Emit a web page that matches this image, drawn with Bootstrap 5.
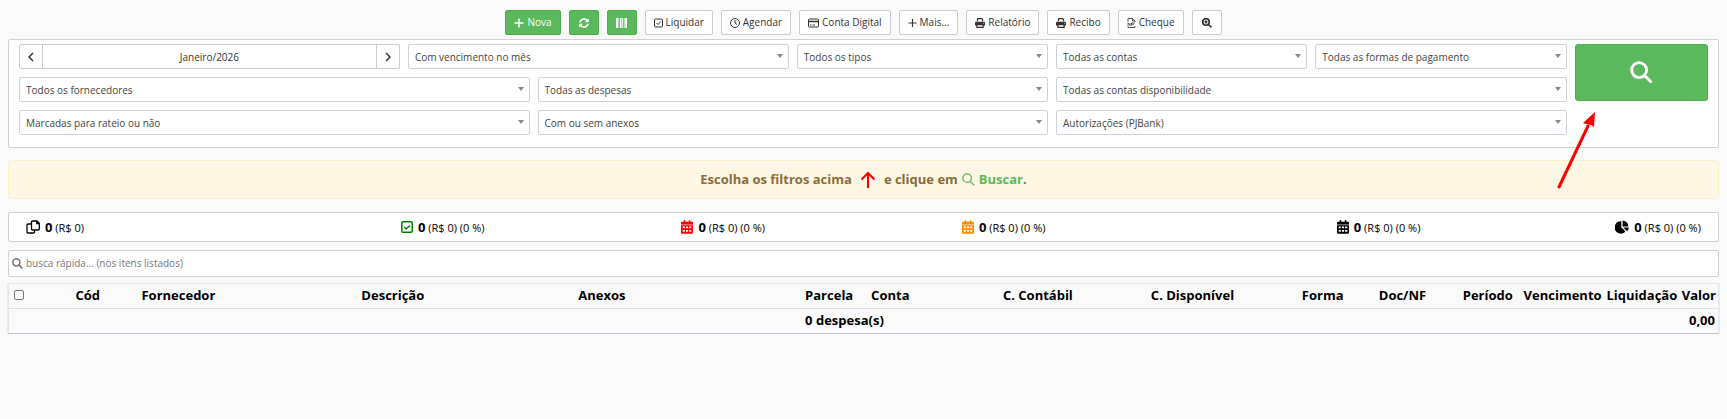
<!DOCTYPE html>
<html lang="pt-BR">
<head>
<meta charset="utf-8">
<meta name="viewport" content="width=device-width, initial-scale=1">
<title>Despesas</title>
<link href="https://cdn.jsdelivr.net/npm/bootstrap@5.3.0/dist/css/bootstrap.min.css" rel="stylesheet">
<style>
  body { font-family: "Open Sans", "Noto Sans", sans-serif; font-size: 10px; line-height: 15px; color: #333; background: #fafafa; }
  svg { fill: currentColor; flex: none; }
  .line-icon { fill: none; stroke: currentColor; }
  .toolbar { gap: 8px; padding: 10px 0 4px; }
  .toolbar .btn, .month .btn { display: inline-flex; align-items: center; justify-content: center; gap: 3px; height: 25px; padding: 0 8px; font-size: 10px; line-height: 15px; border-radius: 2px; }
  .btn-plain { background: #fff; border-color: #ccc; color: #333; }
  .btn-go { background: #5cb85c; border-color: #4cae4c; color: #fff; }
  .btn-plain:hover { background: #e6e6e6; }
  .btn-go:hover { background: #449d44; color: #fff; }
  .toolbar .btn-square { width: 30px; padding: 0; }
  .box { background: #fff; border: 1px solid #ced2da; border-radius: 2px; }
  .filters { padding: 4px 6px 12px; }
  .filters .row { --bs-gutter-x: 8px; --bs-gutter-y: 8px; margin-left: 0; margin-right: 0; }
  .filters .nested { margin-left: -4px; margin-right: -4px; }
  .filters .form-select {
    height: 25px; padding: 1px 20px 0 6px; font-size: 10px; line-height: 15px; color: #444; border-color: #ced2da; border-radius: 2px;
    background-image: url("data:image/svg+xml,%3Csvg xmlns='http://www.w3.org/2000/svg' viewBox='0 0 6 4'%3E%3Cpath fill='%23888' d='M0 0h6L3 4z'/%3E%3C/svg%3E");
    background-size: 6px 4px; background-position: right 5px top 9px;
  }
  .month .btn { width: 24px; padding: 0; }
  .month .form-control { height: 25px; padding: 1px 0 0; font-size: 10px; line-height: 15px; color: #333; border-color: #ccc; border-radius: 2px; }
  .search-btn { height: 57px; border-radius: 3px; }
  .pointer { left: -17px; top: 64px; z-index: 2; pointer-events: none; color: #f00; }
  .hint { margin-top: 12px; padding: 9px; min-height: 39px; background: #fdf7e3; border: 1px solid #faf0cc; border-radius: 3px; color: #8a6d3b; font-size: 13px; line-height: 19px; font-weight: 700; gap: 4px; }
  .hint a { color: #5cb85c; }
  .hint .dot { color: #8a6d3b; }
  .totals { margin-top: 13px; padding: 0 13px; color: #000; font-size: 11px; }
  .totals .row { --bs-gutter-x: 8px; margin: 0; }
  .totals .item { display: flex; align-items: center; height: 28px; gap: 5px; }
  .totals strong { font-size: 13px; }
  .quick { margin-top: 8px; height: 27px; padding: 0 3px; gap: 3px; color: #777; }
  .quick .form-control { padding: 0; font-size: 10px; line-height: 15px; border: 0; background: none; box-shadow: none; }
  .quick .form-control::placeholder { color: #777; }
  .expenses { table-layout: fixed; margin: 6px 0 0; color: #000; font-size: 13px; line-height: 18px; border: 1px solid #e4e7eb; border-bottom-color: #bcc6d2; box-shadow: 0 1px 2px #c9d0d8; }
  .expenses th, .expenses td { padding: 2px 3px 4px; font-weight: 700; white-space: nowrap; background: none; border: 0; height: 25px; vertical-align: middle; }
  .expenses thead tr { border-bottom: 1px solid #dcdfe3; }
  .expenses .form-check-input { display: block; width: 10px; height: 10px; min-height: 0; margin: 0 0 0 2px; border: 1px solid #767676; border-radius: 2px; }
  .c-sel { width: 3.74%; } .c-cod { width: 3.86%; } .c-for { width: 12.86%; } .c-des { width: 12.68%; }
  .c-ane { width: 13.27%; } .c-par { width: 3.86%; } .c-con { width: 7.71%; } .c-ctb { width: 8.65%; }
  .c-dis { width: 8.83%; } .c-frm { width: 4.5%; } .c-doc { width: 4.91%; } .c-per { width: 3.56%; }
  .c-ven { width: 4.85%; } .c-liq { width: 4.4%; } .c-val { width: 2.32%; }
</style>
</head>
<body>
<svg class="d-none">
  <symbol id="search" viewBox="0 0 24 24"><circle cx="9.5" cy="9.5" r="7.8"/><path d="M15 15l7.5 7.5"/></symbol>
  <symbol id="calendar" viewBox="0 0 448 512"><path opacity=".6" d="M0 144h448v48H0z"/><path fill-rule="evenodd" d="M96 0h64v64h128V0h64v64h48c27 0 48 21 48 48v32H0v-32c0-27 21-48 48-48h48zM0 192h448v272c0 27-21 48-48 48H48c-27 0-48-21-48-48zM64 240v64h80v-64zM184 240v64h80v-64zM304 240v64h80v-64zM64 368v64h80v-64zM184 368v64h80v-64zM304 368v64h80v-64z"/></symbol>
  <symbol id="print" viewBox="0 0 512 512"><path fill-rule="evenodd" d="M128 0h226l62 62v98h-64V90l-26-26H160v96H96V32c0-18 14-32 32-32zM64 192h384c35 0 64 29 64 64v112c0 9-7 16-16 16h-48v96c0 18-14 32-32 32H96c-18 0-32-14-32-32v-96H16c-9 0-16-7-16-16V256c0-35 29-64 64-64zm64 176v80h256v-80zM432 248a24 24 0 1 0 0 48 24 24 0 0 0 0-48z"/></symbol>
</svg>

<nav class="toolbar d-flex flex-wrap justify-content-center" aria-label="Ações">
  <button type="button" class="btn btn-go"><svg class="line-icon" width="10" height="10" viewBox="0 0 10 10" stroke-width="1.5"><path d="M5 .5v9M.5 5h9"/></svg>Nova</button>
  <button type="button" class="btn btn-go btn-square" aria-label="Atualizar"><svg width="10" height="10" viewBox="0 0 512 512"><path d="M370.7 133.3C339.5 104 298.9 88 255.8 88c-77.5.1-144.3 53.2-162.8 126.9-1.3 5.4-6.1 9.2-11.7 9.2H24.1c-7.5 0-13.2-6.8-11.8-14.2C33.900 94.900 134.800 8 256 8c66.400 0 126.800 26.100 171.300 68.700L463 41c15.100-15.100 41-4.400 41 17v134c0 13.300-10.700 24-24 24H346c-21.400 0-32.100-25.900-17-41zM32 296h134c21.400 0 32.100 25.900 17 41l-41.800 41.800c31.300 29.300 71.800 45.300 114.900 45.300 77.400-.1 144.300-53.100 162.800-126.800 1.300-5.400 6.100-9.200 11.700-9.200h57.300c7.500 0 13.200 6.800 11.800 14.200C478.100 417.100 377.200 504 256 504c-66.400 0-126.800-26.100-171.300-68.700L49 471c-15.100 15.100-41 4.400-41-17V320c0-13.300 10.700-24 24-24z"/></svg></button>
  <button type="button" class="btn btn-go btn-square" aria-label="Código de barras"><svg width="11" height="10" viewBox="0 0 11 10"><path d="M0 0h2v10H0zM2.6 0h.6v10h-.6zM4 0h1.5v10H4zM6.2 0h1v10h-1zM8 0h.6v10H8zM9.2 0H11v10H9.200z"/></svg></button>
  <button type="button" class="btn btn-plain"><svg class="line-icon" width="9" height="10" viewBox="0 0 9 10"><rect x=".5" y="1" width="8" height="8" rx="1"/><path d="M2.5 5L4 6.500l3-3"/></svg>Liquidar</button>
  <button type="button" class="btn btn-plain"><svg class="line-icon" width="10" height="10" viewBox="0 0 10 10"><circle cx="5" cy="5" r="4.5"/><path d="M5 2v3l2 1.500"/></svg>Agendar</button>
  <button type="button" class="btn btn-plain"><svg class="line-icon" width="11" height="10" viewBox="0 0 11 10"><rect x=".5" y="1" width="10" height="8" rx="1"/><path d="M.5 3.500h10" stroke-width="1.5"/><path d="M2 7h1.500M4.500 7H7"/></svg>Conta Digital</button>
  <button type="button" class="btn btn-plain"><svg class="line-icon" width="9" height="10" viewBox="0 0 10 10" stroke-width="1.3"><path d="M5 .5v9M.5 5h9"/></svg>Mais...</button>
  <button type="button" class="btn btn-plain"><svg width="10" height="10"><use href="#print"/></svg>Relatório</button>
  <button type="button" class="btn btn-plain"><svg width="10" height="10"><use href="#print"/></svg>Recibo</button>
  <button type="button" class="btn btn-plain"><svg class="line-icon" width="9" height="10" viewBox="0 0 9 10" stroke-width=".8"><path d="M1 4V.5h4.500L8 3v1M5.500.5V3H8M1 8v1.500h7V8"/><path d="M1 7.500V5l2 2.500V5M4.500 7.500V5H8M4.500 6.300H7"/></svg>Cheque</button>
  <button type="button" class="btn btn-plain btn-square" aria-label="Ampliar"><svg class="line-icon" width="10" height="10" viewBox="0 0 24 24" stroke-width="4"><use href="#search"/><path d="M9.500 5.500v8M5.500 9.500h8" stroke-width="3"/></svg></button>
</nav>

<main class="px-2">
  <form class="box filters">
    <div class="row">
      <div class="col-11">
        <div class="row nested">
          <div class="col-3">
            <div class="input-group month">
              <button type="button" class="btn btn-plain" aria-label="Mês anterior"><svg class="line-icon" width="6" height="10" viewBox="0 0 6 10" stroke-width="1.5"><path d="M5 1L1 5l4 4"/></svg></button>
              <input class="form-control text-center" value="Janeiro/2026" aria-label="Mês">
              <button type="button" class="btn btn-plain" aria-label="Próximo mês"><svg class="line-icon" width="6" height="10" viewBox="0 0 6 10" stroke-width="1.5"><path d="M1 1l4 4-4 4"/></svg></button>
            </div>
          </div>
          <div class="col-3"><select class="form-select" aria-label="Vencimento"><option>Com vencimento no mês</option></select></div>
          <div class="col-2"><select class="form-select" aria-label="Tipo"><option>Todos os tipos</option></select></div>
          <div class="col-2"><select class="form-select" aria-label="Conta"><option>Todas as contas</option></select></div>
          <div class="col-2"><select class="form-select" aria-label="Forma de pagamento"><option>Todas as formas de pagamento</option></select></div>
          <div class="col-4"><select class="form-select" aria-label="Fornecedor"><option>Todos os fornecedores</option></select></div>
          <div class="col-4"><select class="form-select" aria-label="Despesa"><option>Todas as despesas</option></select></div>
          <div class="col-4"><select class="form-select" aria-label="Conta disponibilidade"><option>Todas as contas disponibilidade</option></select></div>
          <div class="col-4"><select class="form-select" aria-label="Rateio"><option>Marcadas para rateio ou não</option></select></div>
          <div class="col-4"><select class="form-select" aria-label="Anexos"><option>Com ou sem anexos</option></select></div>
          <div class="col-4"><select class="form-select" aria-label="Autorizações"><option>Autorizações (PJBank)</option></select></div>
        </div>
      </div>
      <div class="col-1 position-relative">
        <button type="submit" class="btn btn-go search-btn w-100 d-flex align-items-center justify-content-center" aria-label="Buscar"><svg class="line-icon" width="23" height="23" stroke-width="3"><use href="#search"/></svg></button>
        <svg class="pointer position-absolute" width="44" height="84" viewBox="0 0 44 84"><path d="M5 79L34 18" stroke="currentColor" stroke-width="3" stroke-linecap="round"/><path d="M41 4l-1 15-3-2-5-1-3-1z"/></svg>
      </div>
    </div>
  </form>

  <div class="hint d-flex align-items-center justify-content-center">
    <span>Escolha os filtros acima</span>
    <svg class="line-icon mx-1 text-danger-arrow" width="16" height="18" viewBox="0 0 16 18" stroke-width="2" color="#f00"><path d="M8 17V2M1.500 8.500L8 2l6.500 6.500"/></svg>
    <span>e clique em</span>
    <a href="#" class="d-inline-flex align-items-center gap-1 text-decoration-none"><svg class="line-icon" width="13" height="13" stroke-width="2.5"><use href="#search"/></svg><span>Buscar<span class="dot">.</span></span></a>
  </div>

  <div class="box totals">
    <div class="row">
      <div class="col-2 item"><svg class="line-icon" width="14" height="14" viewBox="0 0 14 14" stroke-width="1.3"><path d="M5.500 2a1 1 0 0 1 1-1H11l2.300 2.300V9a1 1 0 0 1-1 1H6.500a1 1 0 0 1-1-1zM10.800 1v2.500h2.500M5.500 4H2a1 1 0 0 0-1 1v7a1 1 0 0 0 1 1h5.500a1 1 0 0 0 1-1v-2"/></svg><span><strong>0</strong> (R$ 0)</span></div>
      <div class="col-2 item justify-content-center"><svg class="line-icon" color="green" width="12" height="12" viewBox="0 0 12 12" stroke-width="1.5"><rect x=".8" y=".8" width="10.4" height="10.4" rx="1"/><path d="M3.300 6l2 2 3.500-3.600"/></svg><span><strong>0</strong> (R$ 0) (0 %)</span></div>
      <div class="col-2 item justify-content-center"><svg color="red" width="12" height="14"><use href="#calendar"/></svg><span><strong>0</strong> (R$ 0) (0 %)</span></div>
      <div class="col-2 item justify-content-center"><svg color="darkorange" width="12" height="14"><use href="#calendar"/></svg><span><strong>0</strong> (R$ 0) (0 %)</span></div>
      <div class="col-2 item justify-content-end"><svg width="12" height="14"><use href="#calendar"/></svg><span><strong>0</strong> (R$ 0) (0 %)</span></div>
      <div class="col-2 item justify-content-end"><svg width="14" height="14" viewBox="0 0 14 14"><path d="M6.300 1.300v6l4.200 4.200A6.200 6.200 0 1 1 6.300 1.300zM7.600.5a6 6 0 0 1 5.700 5.900H7.600zM8.200 7.500h5.600a6 6 0 0 1-1.700 3.800z"/></svg><span><strong>0</strong> (R$ 0) (0 %)</span></div>
    </div>
  </div>

  <div class="box quick d-flex align-items-center">
    <svg class="line-icon" width="11" height="11" stroke-width="3.5"><use href="#search"/></svg>
    <input type="search" class="form-control" placeholder="busca rápida... (nos itens listados)" aria-label="Busca rápida">
  </div>

  <table class="table expenses">
    <colgroup><col class="c-sel"><col class="c-cod"><col class="c-for"><col class="c-des"><col class="c-ane"><col class="c-par"><col class="c-con"><col class="c-ctb"><col class="c-dis"><col class="c-frm"><col class="c-doc"><col class="c-per"><col class="c-ven"><col class="c-liq"><col class="c-val"></colgroup>
    <thead>
      <tr><th><input type="checkbox" class="form-check-input" aria-label="Selecionar todas"></th><th>Cód</th><th>Fornecedor</th><th>Descrição</th><th>Anexos</th><th>Parcela</th><th>Conta</th><th>C. Contábil</th><th>C. Disponível</th><th>Forma</th><th>Doc/NF</th><th>Período</th><th>Vencimento</th><th>Liquidação</th><th class="text-end">Valor</th></tr>
    </thead>
    <tfoot>
      <tr><td colspan="5"></td><td colspan="2">0 despesa(s)</td><td colspan="7"></td><td class="text-end">0,00</td></tr>
    </tfoot>
  </table>
</main>
<script src="https://cdn.jsdelivr.net/npm/bootstrap@5.3.0/dist/js/bootstrap.bundle.min.js"></script>
</body>
</html>
